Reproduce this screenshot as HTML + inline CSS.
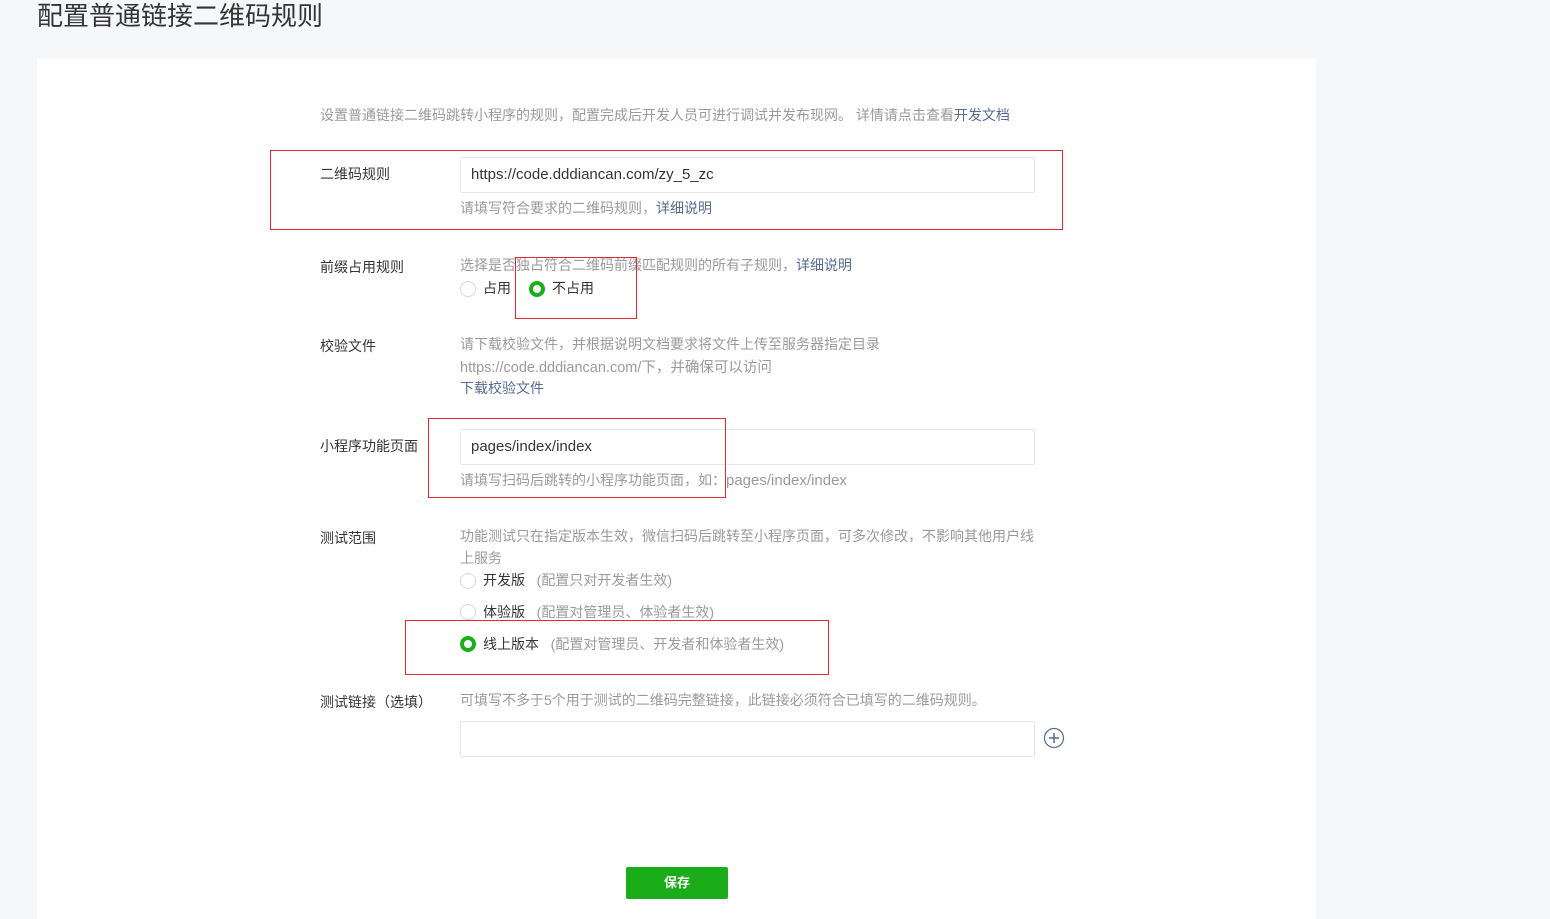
<!DOCTYPE html>
<html><head><meta charset="utf-8"><style>
*{margin:0;padding:0;box-sizing:border-box}
body{width:1550px;height:910px;background:#f6f7f9;font-family:"Liberation Sans","Noto Sans CJK SC",sans-serif;position:relative;overflow:hidden;color:#353535}
.a{position:absolute;white-space:nowrap}
.t{font-size:14px;color:#9a9a9a}
.l{font-size:14px;color:#353535}
.lk{color:#576b95}
.in{position:absolute;border:1px solid #e4e6e9;border-radius:2px;background:#fff;font-size:15px;color:#353535;padding-left:10px;line-height:34px;height:36px}
.r{position:absolute;width:16px;height:16px;border-radius:50%;border:1px solid #d9d9d9;background:#fff}
.rc{border:4px solid #1aad19}
.red{position:absolute;border:1px solid #e5262b}
</style></head><body>
<div class="a" style="left:37px;top:-4px;font-size:26px;color:#353535">配置普通链接二维码规则</div>
<div style="position:absolute;left:37px;top:59px;width:1279px;height:860px;background:#fff"></div>
<div class="a t" style="left:320px;top:105px">设置普通链接二维码跳转小程序的规则，配置完成后开发人员可进行调试并发布现网。 详情请点击查看<span class="lk">开发文档</span></div>

<div class="a l" style="left:320px;top:164px">二维码规则</div>
<div class="in" style="left:460px;top:157px;width:575px">https://code.dddiancan.com/zy_5_zc</div>
<div class="a t" style="left:460px;top:198px">请填写符合要求的二维码规则，<span class="lk">详细说明</span></div>
<div class="red" style="left:270px;top:150px;width:793px;height:80px"></div>

<div class="a l" style="left:320px;top:257px">前缀占用规则</div>
<div class="a t" style="left:460px;top:255px">选择是否独占符合二维码前缀匹配规则的所有子规则，<span class="lk">详细说明</span></div>
<div class="r" style="left:460px;top:281px"></div><div class="a l" style="left:483px;top:278px">占用</div>
<div class="r rc" style="left:529px;top:281px"></div><div class="a l" style="left:552px;top:278px">不占用</div>
<div class="red" style="left:515px;top:257px;width:122px;height:62px"></div>

<div class="a l" style="left:320px;top:336px">校验文件</div>
<div class="a t" style="left:460px;top:334px">请下载校验文件，并根据说明文档要求将文件上传至服务器指定目录</div>
<div class="a t" style="left:460px;top:356px;font-size:14.5px">https://code.dddiancan.com/下，并确保可以访问</div>
<div class="a t lk" style="left:460px;top:378px">下载校验文件</div>

<div class="a l" style="left:320px;top:436px">小程序功能页面</div>
<div class="in" style="left:460px;top:429px;width:575px">pages/index/index</div>
<div class="a t" style="left:460px;top:470px">请填写扫码后跳转的小程序功能页面，如：<span style="font-size:15px">pages/index/index</span></div>
<div class="red" style="left:428px;top:418px;width:298px;height:80px"></div>

<div class="a l" style="left:320px;top:528px">测试范围</div>
<div class="a t" style="left:460px;top:526px">功能测试只在指定版本生效，微信扫码后跳转至小程序页面，可多次修改，不影响其他用户线</div>
<div class="a t" style="left:460px;top:548px">上服务</div>
<div class="r" style="left:460px;top:573px"></div><div class="a l" style="left:483px;top:570px">开发版 <span class="t">&nbsp; (配置只对开发者生效)</span></div>
<div class="r" style="left:460px;top:604px"></div><div class="a l" style="left:483px;top:602px">体验版 <span class="t">&nbsp; (配置对管理员、体验者生效)</span></div>
<div class="r rc" style="left:460px;top:636px"></div><div class="a l" style="left:483px;top:634px">线上版本 <span class="t">&nbsp; (配置对管理员、开发者和体验者生效)</span></div>
<div class="red" style="left:405px;top:620px;width:424px;height:55px"></div>

<div class="a l" style="left:320px;top:692px">测试链接（选填）</div>
<div class="a t" style="left:460px;top:690px">可填写不多于5个用于测试的二维码完整链接，此链接必须符合已填写的二维码规则。</div>
<div class="in" style="left:460px;top:721px;width:575px"></div>
<svg style="position:absolute;left:1043px;top:727px" width="22" height="22" viewBox="0 0 22 22"><circle cx="11" cy="11" r="9.5" fill="none" stroke="#576b95" stroke-width="1.2"/><path d="M11 6v10M6 11h10" stroke="#576b95" stroke-width="1.5"/></svg>

<div style="position:absolute;left:626px;top:867px;width:102px;height:32px;background:#1aad19;border-radius:2px;color:#fff;font-size:13px;font-weight:bold;text-align:center;line-height:32px">保存</div>
</body></html>
